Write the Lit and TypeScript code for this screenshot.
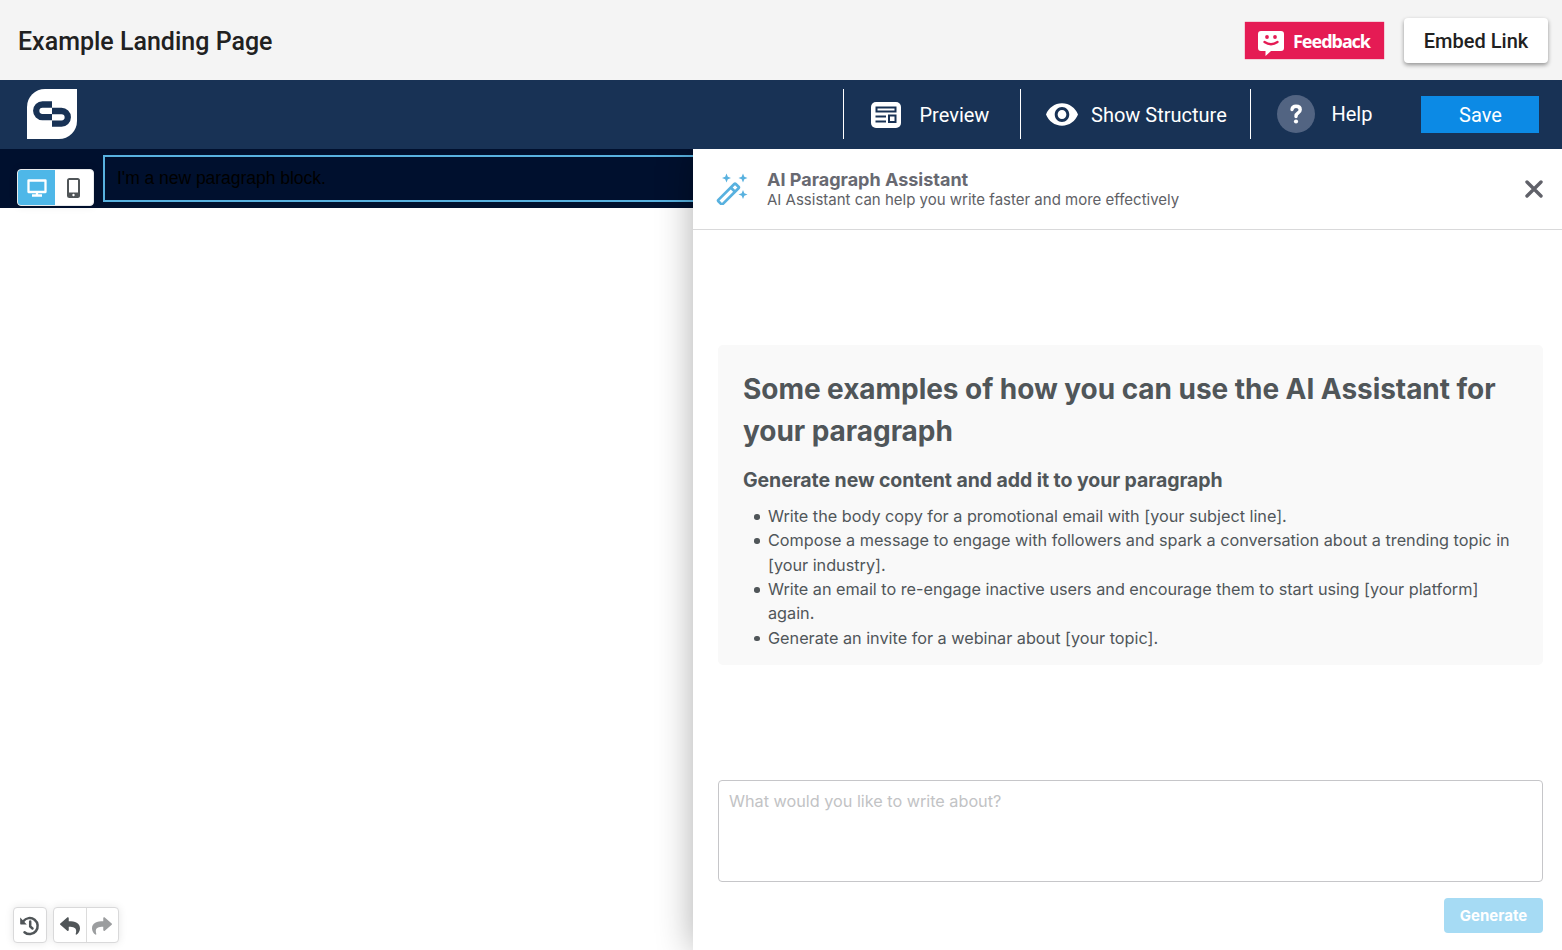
import { LitElement, html, css } from "lit";
import { customElement } from "lit/decorators.js";

@customElement("app-root")
export class AppRoot extends LitElement {
  static styles = css`
    :host { display: flex; flex-direction: column; width: 100%; height: 100vh; overflow: hidden; background: #fff; font-family: Roboto, sans-serif; }
    * { box-sizing: border-box; }
    svg { display: block; flex: none; }
    button { font: inherit; border: 0; padding: 0; margin: 0; background: none; color: inherit; }
    .titlebar { height: 80px; flex: none; background: #f4f4f4; display: flex; align-items: center; padding: 1px 14px 0 18px; }
    .title { flex: 1; margin: 0; padding-top: 1px; font-size: 25px; font-weight: 500; color: #212121; white-space: nowrap; }
    .feedback { width: 139px; height: 37px; margin-right: 20px; background: #e51b54; color: #fff; display: flex; align-items: center; padding-left: 13px; gap: 9px; font: 700 18px "Noto Sans", sans-serif; letter-spacing: -1.05px; box-shadow: 0 0 1px #e51b54; }
    .feedback svg { margin-top: 4px; }
    .embed { width: 144px; height: 45px; border-radius: 4px; background: #fff; color: #212121; font-size: 20px; font-weight: 500; padding-top: 1px; box-shadow: 0 2px 4px rgba(0,0,0,.4); }
    .navbar { height: 69px; flex: none; background: #183255; color: #fff; display: flex; align-items: center; padding: 0 23px 1px 27px; font-size: 20px; }
    .spacer { flex: 1; }
    .item { height: 50px; border-left: 1px solid #fff; display: flex; align-items: center; white-space: nowrap; }
    .preview { width: 177px; padding-left: 27px; gap: 18.5px; }
    .preview svg { margin-top: 2px; }
    .structure { width: 230px; padding-left: 25px; gap: 13px; }
    .structure svg { margin-top: 1px; }
    .help { width: 171px; padding-left: 26px; gap: 16.5px; }
    .item span { padding-top: 2px; }
    .help .helptext { padding-top: 0; }
    .bubble { width: 38px; height: 38px; margin-bottom: 1px; border-radius: 50%; background: #526482; }
    .save { width: 118px; height: 37px; margin-top: 1px; padding-left: 1px; background: #0c8ae5; }
    .work { flex: 1; min-height: 0; display: grid; grid-template-columns: 693px 1fr; }
    .canvas { position: relative; background: #fff; }
    .strip { height: 59px; background: #00102e; padding: 6px 0 0 103px; }
    .block { height: 47px; border: 2px solid #58b1df; border-right: 0; padding: 0 12px 1px; display: flex; align-items: center; font: 17.5px "Liberation Sans", sans-serif; letter-spacing: -0.03px; color: #000; }
    .devices { position: absolute; left: 17px; top: 20px; width: 77px; height: 37px; border-radius: 4px; overflow: hidden; display: grid; grid-template-columns: 37px 38px; background: #fff; border: 1px solid #e8eaec; box-shadow: 0 0 8px rgba(0,0,0,.1); }
    .devices button { display: grid; place-items: center; padding-right: 1px; }
    .devices .on { background: #4eb7e8; padding: 0 0 0 1px; }
    .tools { position: absolute; left: 13px; bottom: 7px; display: flex; gap: 6px; }
    .group { display: flex; height: 36px; background: #fff; border: 1px solid #d9d9da; border-radius: 4px; box-shadow: 0 0 8px rgba(0,0,0,.1); }
    .group button { width: 32px; padding-top: 1px; display: grid; place-items: center; color: #505558; }
    .group button + button { width: 32px; padding-right: 1px; border-left: 1px solid #dcdcdc; color: #9b9d9f; }
    .panel { position: relative; background: #fff; box-shadow: 0 0 34px rgba(0,0,0,.32); clip-path: inset(0 0 0 -60px); font-family: Inter, sans-serif; color: #505659; display: flex; flex-direction: column; }
    .phead { height: 81px; flex: none; border-bottom: 1px solid #d9d9da; display: flex; align-items: center; padding: 0 19px 0 23px; }
    .ptext { flex: 1; margin-left: 19px; }
    .ptitle { margin: 0; font-size: 18px; line-height: 22px; font-weight: 700; color: #686971; }
    .psub { margin: -1px 0 1px; font-size: 15px; line-height: 19px; color: #606166; }
    .pbody { flex: 1; display: flex; align-items: center; padding: 0 19px 0 25px; }
    .examples { width: 825px; height: 320px; background: #f9f9f9; border-radius: 5px; padding: 23px 25px; }
    h1 { margin: 0; font-size: 28px; line-height: 42px; font-weight: 700; letter-spacing: -0.05px; }
    h2 { margin: 14px 0 9px; font-size: 19.5px; line-height: 29px; font-weight: 700; letter-spacing: -0.07px; }
    ul { margin: 0; padding: 0; list-style: none; font-size: 16.25px; line-height: 24.35px; letter-spacing: -0.018px; }
    li { display: grid; grid-template-columns: 6px 744px; column-gap: 8px; padding-left: 11px; }
    li::before { content: ""; width: 5.5px; height: 5.5px; margin-top: 10px; border-radius: 50%; background: #505659; }
    .compose { margin: 0 19px 17px 25px; display: flex; flex-direction: column; align-items: flex-end; gap: 16px; }
    textarea { display: block; width: 100%; height: 102px; border: 1px solid #c6c6c9; border-radius: 4px; padding: 8px 10px; resize: none; font: 16.25px/24px Inter, sans-serif; letter-spacing: -0.02px; }
    textarea::placeholder { color: #c2c3c5; opacity: 1; }
    .generate { width: 99px; height: 35px; border-radius: 4px; background: #a6dbf4; color: #fff; font-size: 15px; font-weight: 700; }
  `;

  render() {
    return html`
      <header class="titlebar">
        <h3 class="title">Example Landing Page</h3>
        <button class="feedback">
          <svg width="26" height="26" viewBox="0 0 26 26"><path fill="#fff" d="M3 1h20q3 0 3 3v14q0 3-3 3H13l-5.500 5V21H3q-3 0-3-3V4q0-3 3-3z"/><circle cx="9" cy="7" r="1.900" fill="#e51b54"/><circle cx="17" cy="7" r="1.900" fill="#e51b54"/><path d="M6.500 12q6.500 4.500 13 0" fill="none" stroke="#e51b54" stroke-width="2.300" stroke-linecap="round"/></svg>
          <span>Feedback</span>
        </button>
        <button class="embed">Embed Link</button>
      </header>
      <nav class="navbar">
        <svg width="50" height="50" viewBox="0 0 50 50"><path fill="#fff" d="M18 0H50V32A18 18 0 0 1 32 50H0V18A18 18 0 0 1 18 0z"/><path d="M25 15.500H15.500a6.300 6.300 0 0 0 0 12.600H25M25 22H34.500a6.300 6.300 0 0 1 0 12.600H25" fill="none" stroke="#183255" stroke-width="6.300"/></svg>
        <div class="spacer"></div>
        <div class="item preview">
          <svg width="30" height="26" viewBox="0 0 30 26"><rect width="30" height="26" rx="5" fill="#fff"/><g fill="none" stroke="#183255" stroke-width="2"><rect x="5.500" y="5.500" width="19" height="4"/><rect x="18" y="13.500" width="6.500" height="6.500"/><path d="M4.500 14.500h10.500M4.500 19.500h10.500"/></g></svg>
          <span>Preview</span>
        </div>
        <div class="item structure">
          <svg width="32" height="23" viewBox="1 4.300 22 15.400" preserveAspectRatio="none"><path fill="#fff" d="M12 4.500C7 4.500 2.730 7.610 1 12c1.730 4.390 6 7.500 11 7.500s9.270-3.110 11-7.500c-1.730-4.390-6-7.500-11-7.500zM12 17c-2.760 0-5-2.240-5-5s2.240-5 5-5 5 2.240 5 5-2.240 5-5 5zm0-8c-1.660 0-3 1.340-3 3s1.340 3 3 3 3-1.340 3-3-1.340-3-3-3z"/></svg>
          <span>Show Structure</span>
        </div>
        <div class="item help">
          <svg class="bubble" viewBox="0 0 38 38"><path d="M15 14.500q.5-3.200 4-3.200 4.200 0 4.200 3.400 0 2-2.200 3.300-2 1.200-2 3.500" fill="none" stroke="#fff" stroke-width="3.400" stroke-linecap="round"/><circle cx="19" cy="26.500" r="2.100" fill="#fff"/></svg>
          <span class="helptext">Help</span>
        </div>
        <button class="save">Save</button>
      </nav>
      <main class="work">
        <section class="canvas">
          <div class="strip"><div class="block">I'm a new paragraph block.</div></div>
          <div class="devices">
            <button class="on" aria-label="Desktop"><svg width="20" height="18" viewBox="0 0 20 18"><path fill="none" stroke="#fff" stroke-width="2.300" stroke-linejoin="round" d="M1.500 1.500h17v11.500h-17zM10 13v3M5 16.500h10"/></svg></button>
            <button aria-label="Mobile"><svg width="13" height="20" viewBox="0 0 13 20"><rect width="13" height="20" rx="2.500" fill="#505558"/><path fill="#fff" d="M2 2h9v12.500H2z"/><circle cx="6.500" cy="17" r="1.200" fill="#fff"/></svg></button>
          </div>
          <div class="tools">
            <div class="group"><button aria-label="History"><svg width="20" height="20" viewBox="0 0 20 20"><path d="M3.300 5.200A8 8 0 1 1 4.500 16.200M10.200 5.500v5l2.300 2" fill="none" stroke="#505558" stroke-width="2.500" stroke-linecap="round"/><path fill="#505558" d="M.2 1.600v6.200q0 .6.600.6h6z"/></svg></button></div>
            <div class="group">
              <button aria-label="Undo"><svg width="20" height="20" viewBox="0 0 512 512"><path fill="currentColor" d="M8.309 189.836L184.313 37.851C199.719 24.546 224 35.347 224 56.015v80.053c160.629 1.839 288 34.032 288 186.258 0 61.441-39.581 122.309-83.333 154.132-13.653 9.931-33.111-2.533-28.077-18.631 45.344-145.012-21.507-183.510-176.590-185.742V360c0 20.700-24.300 31.453-39.686 18.164l-176.004-152c-11.071-9.562-11.086-26.753 0-36.328z"/></svg></button>
              <button aria-label="Redo"><svg width="20" height="20" viewBox="0 0 512 512"><path fill="currentColor" d="M503.691 189.836L327.687 37.851C312.281 24.546 288 35.347 288 56.015v80.053C127.371 137.907 0 170.100 0 322.326c0 61.441 39.581 122.309 83.333 154.132 13.653 9.931 33.111-2.533 28.077-18.631C66.066 312.814 132.917 274.316 288 272.085V360c0 20.700 24.300 31.453 39.686 18.164l176.004-152c11.071-9.562 11.086-26.753 0-36.328z"/></svg></button>
            </div>
          </div>
        </section>
        <aside class="panel">
          <header class="phead">
            <svg width="32" height="32" viewBox="0 0 32 32"><g transform="translate(13 20.500) rotate(-45)" fill="none" stroke="#58b1df" stroke-width="2.700" stroke-linejoin="round"><rect x="-13" y="-3" width="24.500" height="6" rx="1"/><path d="M5.500-3V3"/></g><path fill="#58b1df" d="M10.500 .5l1.300 3.200 3.200 1.300-3.200 1.300-1.300 3.200-1.300-3.200-3.200-1.300 3.200-1.300zM27 .5l1.300 3.200 3.200 1.300-3.200 1.300-1.300 3.200-1.300-3.200-3.200-1.300 3.200-1.300zM27 17l1.300 3.200 3.200 1.300-3.200 1.300-1.300 3.200-1.300-3.200-3.200-1.300 3.200-1.300z"/></svg>
            <div class="ptext">
              <p class="ptitle">AI Paragraph Assistant</p>
              <p class="psub">AI Assistant can help you write faster and more effectively</p>
            </div>
            <svg width="18" height="18" viewBox="0 0 18 18"><path d="M2 2l14 14M16 2L2 16" stroke="#606169" stroke-width="3.400" stroke-linecap="round"/></svg>
          </header>
          <div class="pbody">
            <section class="examples">
              <h1>Some examples of how you can use the AI Assistant for your paragraph</h1>
              <h2>Generate new content and add it to your paragraph</h2>
              <ul>
                <li>Write the body copy for a promotional email with [your subject line].</li>
                <li>Compose a message to engage with followers and spark a conversation about a trending topic in [your industry].</li>
                <li>Write an email to re-engage inactive users and encourage them to start using [your platform] again.</li>
                <li>Generate an invite for a webinar about [your topic].</li>
              </ul>
            </section>
          </div>
          <div class="compose">
            <textarea placeholder="What would you like to write about?"></textarea>
            <button class="generate">Generate</button>
          </div>
        </aside>
      </main>
    `;
  }
}
